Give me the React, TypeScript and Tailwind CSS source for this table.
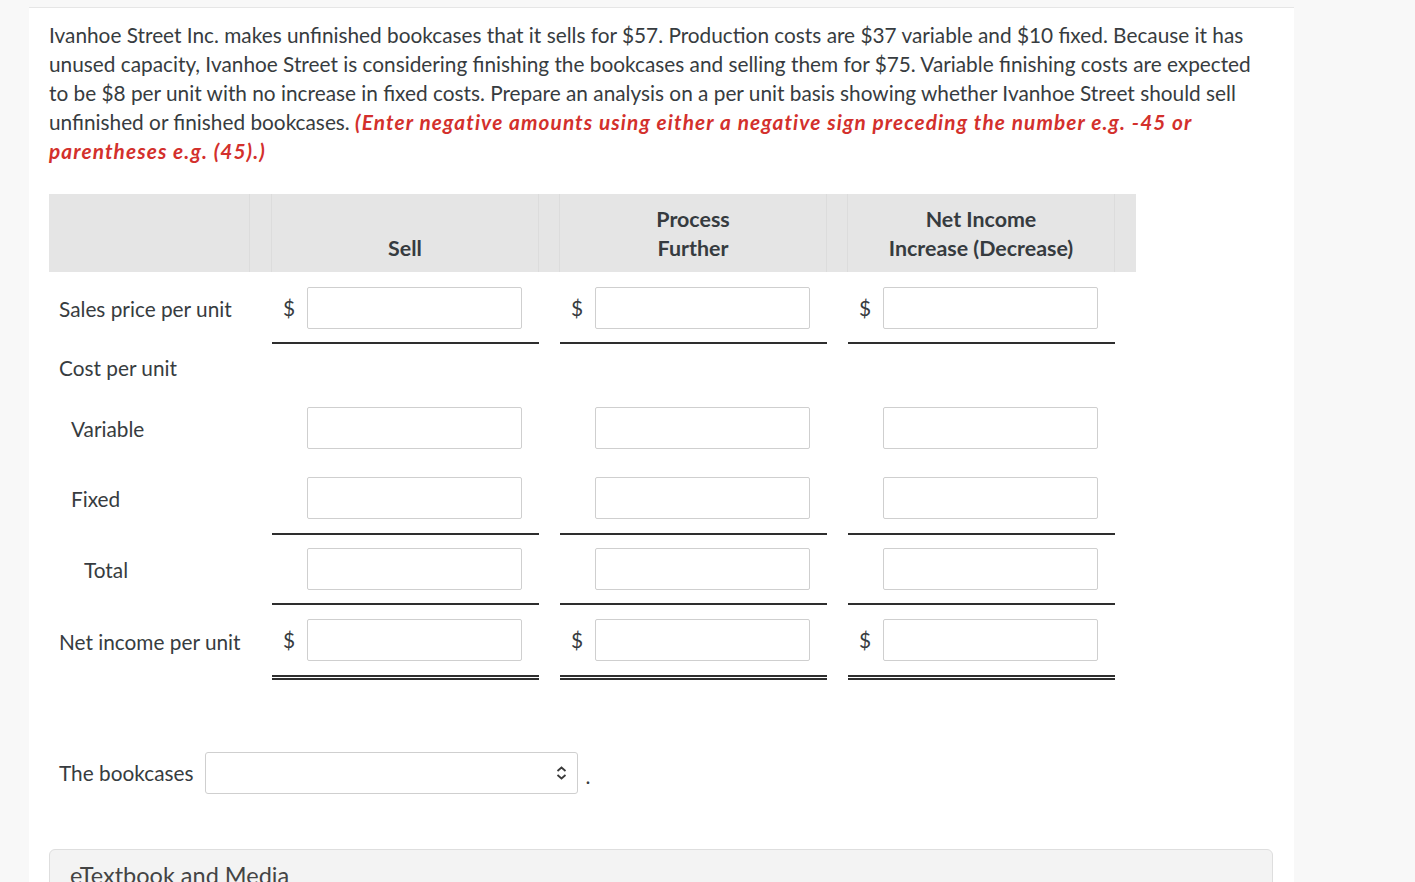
const inputCls =
  "block w-[215px] h-[42px] border border-[#cfcfcf] rounded-[2px] bg-white";

type Line = "none" | "single" | "double";

const GroupCell = ({ dollar, line, pad }: { dollar: boolean; line: Line; pad: string }) => {
  const lineCls =
    line === "single"
      ? "border-b-2 border-[#2e2e2e]"
      : line === "double"
      ? "border-b-[5px] border-double border-[#2e2e2e]"
      : "";
  return (
    <div className={`w-[267px] flex items-center ${pad} ${lineCls}`}>
      <span className="w-[35px] pl-[11px] text-[20.8px] leading-none">{dollar ? "$" : ""}</span>
      <input className={inputCls} />
    </div>
  );
};

const AmountRow = ({
  label,
  indent,
  dollar = false,
  line = "none",
  pad,
}: {
  label: string;
  indent: string;
  dollar?: boolean;
  line?: Line;
  pad: string;
}) => (
  <div className="flex">
    <div className={`w-[223px] flex items-center ${indent} ${pad} ${line === "none" ? "" : "mb-[2px]"}`}>
      {label}
    </div>
    <div className="flex gap-[21px]">
      <GroupCell dollar={dollar} line={line} pad={pad} />
      <GroupCell dollar={dollar} line={line} pad={pad} />
      <GroupCell dollar={dollar} line={line} pad={pad} />
    </div>
  </div>
);

export default function App() {
  return (
    <div
      className="min-h-[882px] bg-[#f8f8f8] text-[#373c40]"
      style={{ fontFamily: "Lato, 'Open Sans', sans-serif" }}
    >
      <div className="h-[7px]" />
      <div className="ml-[29px] w-[1265px] min-h-[875px] bg-white border-t border-[#e6e6e6] px-[20px] pt-[12px]">
        <p className="text-[20.8px] leading-[29px]">
          Ivanhoe Street Inc. makes unfinished bookcases that it sells for $57. Production costs are $37 variable and
          $10 fixed. Because it has unused capacity, Ivanhoe Street is considering finishing the bookcases and selling
          them for $75. Variable finishing costs are expected to be $8 per unit with no increase in fixed costs.
          Prepare an analysis on a per unit basis showing whether Ivanhoe Street should sell unfinished or finished
          bookcases.{" "}
          <span className="font-bold italic text-[#d3302c] tracking-[1.1px]">
            (Enter negative amounts using either a negative sign preceding the number e.g. -45 or parentheses e.g.
            (45).)
          </span>
        </p>

        {/* header */}
        <div className="mt-[29px] flex w-[1087px] h-[78px] bg-[#e5e5e5] text-[21.4px] leading-[29px] font-bold text-[#363b3f]">
          <div className="w-[201px] border-r border-[#dcdcdc]" />
          <div className="w-[22px] border-r border-[#dcdcdc]" />
          <div className="w-[267px] flex items-end justify-center pb-[9px] border-r border-[#dcdcdc]">Sell</div>
          <div className="w-[21px] border-r border-[#dcdcdc]" />
          <div className="w-[267px] flex items-end justify-center text-center pb-[9px] border-r border-[#dcdcdc]">
            Process
            <br />
            Further
          </div>
          <div className="w-[21px] border-r border-[#dcdcdc]" />
          <div className="w-[267px] flex items-end justify-center text-center pb-[9px] border-r border-[#dcdcdc]">
            Net Income
            <br />
            Increase (Decrease)
          </div>
          <div className="w-[21px]" />
        </div>

        {/* body */}
        <div className="text-[20.8px] leading-[29px]">
          <AmountRow label="Sales price per unit" indent="pl-[10px]" dollar line="single" pad="pt-[15px] pb-[13px]" />
          <div className="h-[50px] flex items-center pl-[10px] pb-[3px]">Cost per unit</div>
          <AmountRow label="Variable" indent="pl-[22px]" pad="pt-[13px] pb-[14px]" />
          <AmountRow label="Fixed" indent="pl-[22px]" line="single" pad="pt-[14px] pb-[14px]" />
          <AmountRow label="Total" indent="pl-[35px]" line="single" pad="pt-[13px] pb-[13px]" />
          <AmountRow label="Net income per unit" indent="pl-[10px]" dollar line="double" pad="pt-[14px] pb-[14px]" />
        </div>

        {/* conclusion */}
        <div className="mt-[72px] flex items-center pl-[10px] text-[20.8px]">
          <span>The bookcases</span>
          <div className="ml-[12px] w-[373px] h-[42px] border border-[#cfcfcf] rounded-[3px] bg-white flex items-center justify-end pr-[9px]">
            <svg width="13" height="16" viewBox="0 0 13 16" fill="none" stroke="#3a3a3a" strokeWidth="1.8">
              <path d="M2.5 6 6.5 2.5 10.5 6" />
              <path d="M2.5 10 6.5 13.5 10.5 10" />
            </svg>
          </div>
          <span className="ml-[7px] mt-[6px]">.</span>
        </div>

        <div className="mt-[55px] w-[1224px] h-[60px] bg-[#f3f3f3] border border-[#dedede] rounded-t-[6px] pl-[20px] pt-[8px] text-[23.5px] text-[#444]">
          eTextbook and Media
        </div>
      </div>
    </div>
  );
}
